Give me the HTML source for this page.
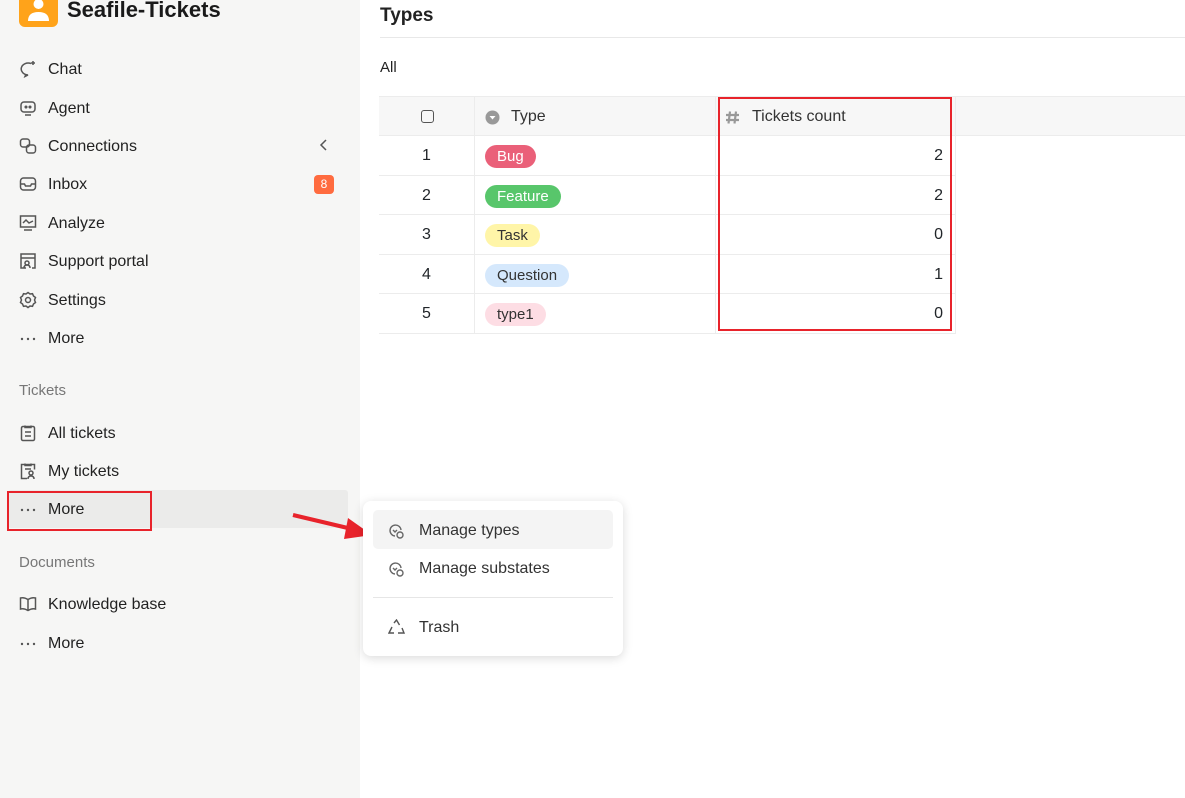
<!DOCTYPE html>
<html><head><meta charset="utf-8"><style>
*{box-sizing:border-box;margin:0;padding:0}
body{width:1185px;height:798px;overflow:hidden;font-family:"Liberation Sans",sans-serif;background:#fff;position:relative;color:#212529}
.sb{position:absolute;left:0;top:0;width:360px;height:798px;background:#f6f6f5}
.logo{position:absolute;left:19px;top:-14px;width:39px;height:41px;background:#ffa31a;border-radius:6px}
.title{position:absolute;left:67px;top:-3px;font-size:22px;font-weight:bold;color:#1a1a1a}
.it{position:absolute;left:19px;font-size:16px;color:#222;height:20px;line-height:20px}
.it svg{position:absolute;left:0;top:1px}
.it span{position:absolute;left:29px;white-space:nowrap;top:1px}
.sec{position:absolute;left:19px;font-size:15px;color:#777}
.badge{position:absolute;left:314px;top:175px;width:20px;height:19px;border-radius:4px;background:#ff6b3f;color:#fff;font-size:12px;text-align:center;line-height:19px}
.h1{position:absolute;left:380px;top:5px;font-size:19px;font-weight:bold;color:#222}
.hr{position:absolute;left:380px;top:37px;width:805px;height:1px;background:#e8e8e8}
.all{position:absolute;left:380px;top:59px;font-size:15px;color:#222}
.tbl{position:absolute;left:379px;top:96px}
.row{position:absolute;left:0;height:40px;border-bottom:1px solid #ececec}
.c{position:absolute;top:0;height:100%;border-right:1px solid #ececec;font-size:16px}
.pill{position:absolute;left:10px;top:9px;height:23px;line-height:23px;border-radius:12px;padding:0 12px;font-size:15px}
.menu{position:absolute;left:363px;top:501px;width:260px;height:155px;background:#fff;border-radius:8px;box-shadow:0 2px 10px rgba(0,0,0,.15)}
.mi{position:absolute;left:56px;font-size:16px;color:#333}
</style></head><body>
<div class="sb">
<div class="logo"><svg width="39" height="41" viewBox="0 0 39 41"><circle cx="19.5" cy="18" r="5" fill="#fff"/><path d="M9 35q0-9 10.5-9t10.5 9z" fill="#fff"/></svg></div>
<div class="title">Seafile-Tickets</div>
<div class="it" style="top:59px"><svg width="18" height="18" viewBox="0 0 18 18" fill="none" stroke="#555" stroke-width="1.5"><path d="M12 3.5A7 6 0 1 0 9 15l-3 1.5 1-2.5"/><path d="M14 1v4M12 3h4"/></svg><span>Chat</span></div>
<div class="it" style="top:98px"><svg width="18" height="18" viewBox="0 0 18 18" fill="none" stroke="#555" stroke-width="1.5"><rect x="2" y="3" width="14" height="10" rx="3"/><path d="M6 16h6"/><circle cx="7" cy="8" r=".8" fill="#555"/><circle cx="11" cy="8" r=".8" fill="#555"/></svg><span>Agent</span></div>
<div class="it" style="top:136px"><svg width="18" height="18" viewBox="0 0 18 18" fill="none" stroke="#555" stroke-width="1.5"><rect x="1.5" y="2" width="9" height="8" rx="2.5"/><rect x="7.5" y="8" width="9" height="8" rx="2.5"/></svg><span>Connections</span></div>
<svg style="position:absolute;left:319px;top:139px" width="10" height="12" fill="none" stroke="#555" stroke-width="1.5"><path d="M7 1L2 6l5 5"/></svg>
<div class="it" style="top:174px"><svg width="18" height="18" viewBox="0 0 18 18" fill="none" stroke="#555" stroke-width="1.5"><rect x="1.5" y="3" width="15" height="12" rx="3"/><path d="M1.5 9h4l1 2h5l1-2h4"/></svg><span>Inbox</span></div>
<div class="badge">8</div>
<div class="it" style="top:213px"><svg width="18" height="18" viewBox="0 0 18 18" fill="none" stroke="#555" stroke-width="1.5"><rect x="1.5" y="2" width="15" height="11"/><path d="M4 9l3-3 3 3 4-2M5 16h8"/></svg><span>Analyze</span></div>
<div class="it" style="top:251px"><svg width="18" height="18" viewBox="0 0 18 18" fill="none" stroke="#555" stroke-width="1.5"><path d="M7 16H2V2h14v14h-3M2 6h14"/><circle cx="8" cy="11" r="2"/><path d="M5 16q0-3 3-3t3 3"/></svg><span>Support portal</span></div>
<div class="it" style="top:290px"><svg width="18" height="18" viewBox="0 0 18 18" fill="none" stroke="#555" stroke-width="1.5"><circle cx="9" cy="9" r="2.5"/><path d="M9 1.5l2 1.5 2.5-.3 1 2.3 2 1.5-1 2.5 1 2.5-2 1.5-1 2.3-2.5-.3-2 1.5-2-1.5-2.5.3-1-2.3-2-1.5 1-2.5-1-2.5 2-1.5 1-2.3 2.5.3z"/></svg><span>Settings</span></div>
<div class="it" style="top:328px"><svg width="18" height="18" viewBox="0 0 18 18" fill="#555"><circle cx="3" cy="10" r="1.2"/><circle cx="9" cy="10" r="1.2"/><circle cx="15" cy="10" r="1.2"/></svg><span>More</span></div>
<div class="sec" style="top:382px">Tickets</div>
<div class="it" style="top:423px"><svg width="18" height="18" viewBox="0 0 18 18" fill="none" stroke="#555" stroke-width="1.5"><rect x="2.5" y="2.5" width="13" height="14" rx="1.5"/><path d="M6 1.5v2h6v-2M6 8h6M6 12h6"/></svg><span>All tickets</span></div>
<div class="it" style="top:461px"><svg width="18" height="18" viewBox="0 0 18 18" fill="none" stroke="#555" stroke-width="1.5"><path d="M8 16.5H2.5v-14h13v5M6 1.5v2h6v-2M6 7h6"/><circle cx="12" cy="11" r="2"/><path d="M9 17q0-3 3-3t3 3"/></svg><span>My tickets</span></div>
<div style="position:absolute;left:8px;top:490px;width:340px;height:38px;background:#ebebea;border-radius:3px"></div>
<div style="position:absolute;left:7px;top:491px;width:145px;height:40px;border:2px solid #e8232b"></div>
<div class="it" style="top:499px"><svg width="18" height="18" viewBox="0 0 18 18" fill="#555"><circle cx="3" cy="10" r="1.2"/><circle cx="9" cy="10" r="1.2"/><circle cx="15" cy="10" r="1.2"/></svg><span>More</span></div>
<div class="sec" style="top:554px">Documents</div>
<div class="it" style="top:594px"><svg width="18" height="18" viewBox="0 0 18 18" fill="none" stroke="#555" stroke-width="1.5"><path d="M9 4.5Q5 2 1.5 3v11Q5 13 9 15.5 13 13 16.5 14V3Q13 2 9 4.5v11"/></svg><span>Knowledge base</span></div>
<div class="it" style="top:633px"><svg width="18" height="18" viewBox="0 0 18 18" fill="#555"><circle cx="3" cy="10" r="1.2"/><circle cx="9" cy="10" r="1.2"/><circle cx="15" cy="10" r="1.2"/></svg><span>More</span></div>
</div>
<div class="h1">Types</div>
<div class="hr"></div>
<div class="all">All</div>
<div class="tbl">
<div class="row" style="top:0;width:806px;background:#f7f7f7;border-top:1px solid #ececec">
<div class="c" style="left:0;width:96px"><div style="position:absolute;left:42px;top:13px;width:13px;height:13px;border:1.5px solid #555;border-radius:3px"></div></div>
<div class="c" style="left:96px;width:241px"><svg style="position:absolute;left:10px;top:13px" width="15" height="15"><circle cx="7.5" cy="7.5" r="7" fill="#999"/><path d="M4.5 6h6l-3 3.5z" fill="#fff"/></svg><span style="position:absolute;left:36px;top:11px;color:#333">Type</span></div>
<div class="c" style="left:337px;width:240px"><svg style="position:absolute;left:9px;top:13px" width="15" height="15" stroke="#999" stroke-width="2.2"><path d="M5 1.5L3.5 13.5M11 1.5L9.5 13.5M1 5h13M1 10h13"/></svg><span style="position:absolute;left:36px;top:11px;color:#333">Tickets count</span></div>
</div>
<div class="row" style="top:40px;width:577px"><div class="c" style="left:0;width:96px;text-align:center;line-height:40px">1</div><div class="c" style="left:96px;width:241px"><span class="pill" style="background:#ea6079;color:#fff">Bug</span></div><div class="c" style="left:337px;width:240px;text-align:right;padding-right:12px;line-height:40px">2</div></div>
<div class="row" style="top:80px;width:577px;height:39px"><div class="c" style="left:0;width:96px;text-align:center;line-height:39px">2</div><div class="c" style="left:96px;width:241px"><span class="pill" style="background:#58c66b;color:#fff">Feature</span></div><div class="c" style="left:337px;width:240px;text-align:right;padding-right:12px;line-height:39px">2</div></div>
<div class="row" style="top:119px;width:577px"><div class="c" style="left:0;width:96px;text-align:center;line-height:40px">3</div><div class="c" style="left:96px;width:241px"><span class="pill" style="background:#fff5a8;color:#333">Task</span></div><div class="c" style="left:337px;width:240px;text-align:right;padding-right:12px;line-height:40px">0</div></div>
<div class="row" style="top:159px;width:577px;height:39px"><div class="c" style="left:0;width:96px;text-align:center;line-height:39px">4</div><div class="c" style="left:96px;width:241px"><span class="pill" style="background:#d5e8fc;color:#333">Question</span></div><div class="c" style="left:337px;width:240px;text-align:right;padding-right:12px;line-height:39px">1</div></div>
<div class="row" style="top:198px;width:577px"><div class="c" style="left:0;width:96px;text-align:center;line-height:40px">5</div><div class="c" style="left:96px;width:241px"><span class="pill" style="background:#fddde4;color:#333">type1</span></div><div class="c" style="left:337px;width:240px;text-align:right;padding-right:12px;line-height:40px">0</div></div>
</div>
<div style="position:absolute;left:718px;top:97px;width:234px;height:234px;border:2px solid #e8232b"></div>
<svg style="position:absolute;left:290px;top:505px" width="85" height="40"><path d="M3 10L62 24" stroke="#e8232b" stroke-width="4"/><path d="M58 13L82 30 54 34z" fill="#e8232b"/></svg>
<div class="menu">
<div style="position:absolute;left:10px;top:9px;width:240px;height:39px;background:#f4f4f4;border-radius:5px"></div>
<svg style="position:absolute;left:25px;top:22px" width="17" height="17" viewBox="0 0 17 17" fill="none" stroke="#666" stroke-width="1.4"><path d="M7 13A5.5 5.5 0 1 1 13 7"/><circle cx="12" cy="12" r="3"/><path d="M5 7l2 2 2-2"/></svg>
<div class="mi" style="top:21px">Manage types</div>
<svg style="position:absolute;left:25px;top:60px" width="17" height="17" viewBox="0 0 17 17" fill="none" stroke="#666" stroke-width="1.4"><path d="M7 13A5.5 5.5 0 1 1 13 7"/><circle cx="12" cy="12" r="3"/><path d="M5 7l2 2 2-2"/></svg>
<div class="mi" style="top:59px">Manage substates</div>
<div style="position:absolute;left:10px;top:96px;width:240px;height:1px;background:#e6e6e6"></div>
<svg style="position:absolute;left:25px;top:118px" width="17" height="16" viewBox="0 0 17 16" fill="none" stroke="#555" stroke-width="1.4"><path d="M6 4L8.5 1l3 5M14 9l2 5H10M6 14H1l3-6"/></svg>
<div class="mi" style="top:118px">Trash</div>
</div>
</body></html>
